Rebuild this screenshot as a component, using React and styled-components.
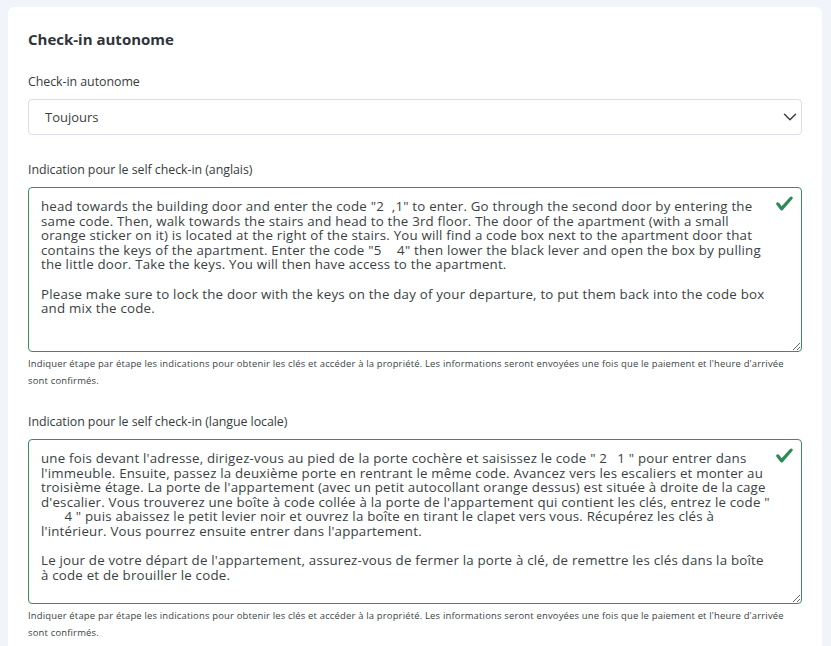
import styled, { createGlobalStyle } from "styled-components";
import { ChevronDown } from "lucide-react";

const GlobalStyle = createGlobalStyle`
  html, body {
    margin: 0;
    background: #f1f4f8;
  }
  body {
    font-family: "Open Sans", "Noto Sans", Arial, sans-serif;
    color: #3b3f44;
  }
`;

const englishText = `head towards the building door and enter the code "2\u2007,1" to enter. Go through the second door by entering the same code. Then, walk towards the stairs and head to the 3rd floor. The door of the apartment (with a small orange sticker on it) is located at the right of the stairs. You will find a code box next to the apartment door that contains the keys of the apartment. Enter the code "5\u2007\u20074" then lower the black lever and open the box by pulling the little door. Take the keys. You will then have access to the apartment.

Please make sure to lock the door with the keys on the day of your departure, to put them back into the code box and mix the code.`;

const localText = `une fois devant l'adresse, dirigez-vous au pied de la porte cochère et saisissez le code " 2\u2007\u20091 " pour entrer dans l'immeuble. Ensuite, passez la deuxième porte en rentrant le même code. Avancez vers les escaliers et monter au troisième étage. La porte de l'appartement (avec un petit autocollant orange dessus) est située à droite de la cage d'escalier. Vous trouverez une boîte à code collée à la porte de l'appartement qui contient les clés, entrez le code " \u2007\u2007\u20074 " puis abaissez le petit levier noir et ouvrez la boîte en tirant le clapet vers vous. Récupérez les clés à l'intérieur. Vous pourrez ensuite entrer dans l'appartement.

Le jour de votre départ de l'appartement, assurez-vous de fermer la porte à clé, de remettre les clés dans la boîte à code et de brouiller le code.`;

const helpText =
  "Indiquer étape par étape les indications pour obtenir les clés et accéder à la propriété. Les informations seront envoyées une fois que le paiement et l'heure d'arrivée sont confirmés.";

const CheckIcon = () => (
  <svg width="19" height="19" viewBox="0 0 8 8">
    <path
      fill="#2f8a5a"
      d="M2.3 6.73L.6 4.53c-.4-1.04.46-1.4 1.1-.8l1.1 1.4 3.4-3.8c.6-.63 1.6-.27 1.2.7l-4 4.6c-.43.5-.8.4-1.1.1z"
    />
  </svg>
);

const InstructionField = ({ label, value }) => (
  <FormGroup>
    <Label>{label}</Label>
    <FieldWrap>
      <TextArea defaultValue={value} />
      <ValidMark>
        <CheckIcon />
      </ValidMark>
    </FieldWrap>
    <Help>{helpText}</Help>
  </FormGroup>
);

export default function App() {
  return (
    <>
      <GlobalStyle />
      <Page>
        <Card>
          <Title>Check-in autonome</Title>
          <FormGroup $space={25}>
            <Label>Check-in autonome</Label>
            <FieldWrap>
              <Select defaultValue="always">
                <option value="always">Toujours</option>
                <option value="never">Jamais</option>
              </Select>
              <Chevron>
                <ChevronDown size={22} strokeWidth={1.6} />
              </Chevron>
            </FieldWrap>
          </FormGroup>
          <InstructionField
            label="Indication pour le self check-in (anglais)"
            value={englishText}
          />
          <InstructionField
            label="Indication pour le self check-in (langue locale)"
            value={localText}
          />
        </Card>
      </Page>
    </>
  );
}

const Page = styled.div`
  padding: 7px 9px 0 8px;
`;

const Card = styled.section`
  background: #ffffff;
  border-radius: 6px;
  padding: 20px 20px 10px;
`;

const Title = styled.h5`
  margin: 0 0 21px;
  font-size: 15px;
  line-height: 24px;
  font-weight: 700;
  color: #2f343a;
`;

const FormGroup = styled.div`
  margin-bottom: ${(p) => p.$space ?? 23}px;
`;

const Label = styled.label`
  display: block;
  margin-bottom: 7px;
  font-size: 12.4px;
  line-height: 20px;
  letter-spacing: -0.05px;
  color: #373b40;
`;

const FieldWrap = styled.div`
  position: relative;
`;

const Select = styled.select`
  display: block;
  width: 100%;
  height: 36px;
  box-sizing: border-box;
  padding: 0 30px 0 16px;
  border: 1px solid #dcdfe3;
  border-radius: 4px;
  background: #ffffff;
  font-family: "Open Sans", "Noto Sans", Arial, sans-serif;
  font-size: 13px;
  color: #3b3f44;
  appearance: none;
  outline: none;
`;

const Chevron = styled.span`
  position: absolute;
  right: 1px;
  top: 7px;
  color: #3b3f44;
  pointer-events: none;
`;

const TextArea = styled.textarea`
  display: block;
  width: 100%;
  height: 165px;
  box-sizing: border-box;
  padding: 11px 30px 10px 12px;
  border: 1px solid #3a8c63;
  border-radius: 4px;
  font-family: "Open Sans", "Noto Sans", Arial, sans-serif;
  font-size: 13.3px;
  line-height: 14.6px;
  letter-spacing: 0.2px;
  color: #3b3f44;
  resize: vertical;
  outline: none;
`;

const ValidMark = styled.span`
  position: absolute;
  top: 7px;
  right: 8px;
  pointer-events: none;
`;

const Help = styled.small`
  display: block;
  margin-top: 3px;
  font-size: 9.45px;
  line-height: 17px;
  letter-spacing: 0.18px;
  color: #3b3f44;
`;
